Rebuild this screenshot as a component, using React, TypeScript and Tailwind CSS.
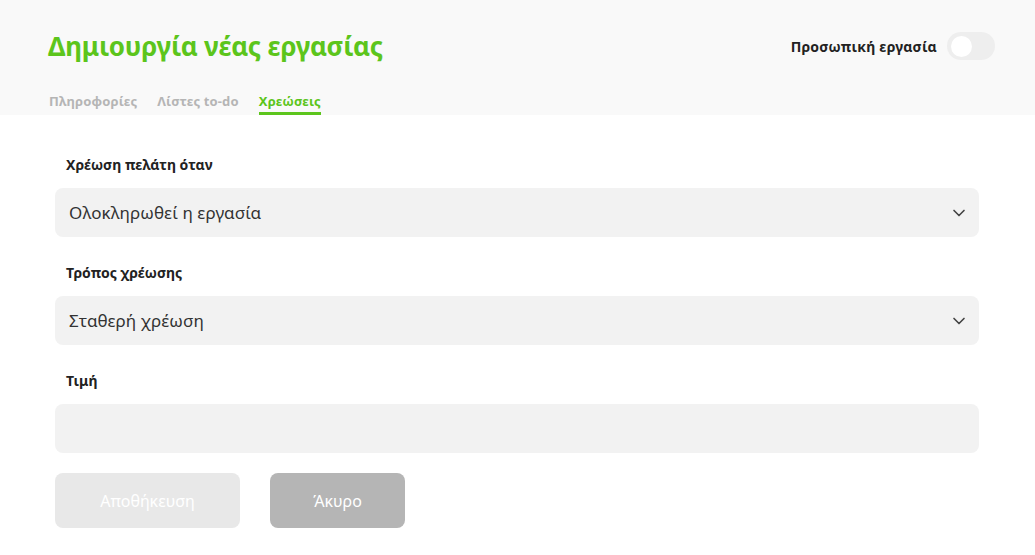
import { ChevronDown } from 'lucide-react';

const font = { fontFamily: '"Noto Sans", "DejaVu Sans", sans-serif' };

const tabs = ['Πληροφορίες', 'Λίστες to-do', 'Χρεώσεις'];

function Select({ value }: { value: string }) {
  return (
    <div className="flex h-[49px] items-center justify-between rounded-lg bg-[#f2f2f2] pl-[14px] pr-[10px]">
      <span className="text-[17px] tracking-[0.1px] text-[#333]">{value}</span>
      <ChevronDown className="h-5 w-5 text-[#444]" strokeWidth={2} />
    </div>
  );
}

function Field({ label, children }: { label: string; children: React.ReactNode }) {
  return (
    <div className="mb-[26px]">
      <div className="mb-[13px] pl-[11px] text-[14px] font-bold leading-[20px] text-[#222]">{label}</div>
      {children}
    </div>
  );
}

export default function App() {
  return (
    <div className="h-[555px] w-[1035px] overflow-hidden bg-white" style={font}>
      <div className="bg-[#f9f9f9] pl-[48px] pr-[40px]">
        <div className="flex h-[92px] items-center justify-between">
          <h1 className="text-[26px] font-bold tracking-[-0.2px] text-[#5cc51c]">Δημιουργία νέας εργασίας</h1>
          <div className="flex items-center gap-[10px]">
            <span className="text-[14px] font-bold tracking-[0.25px] text-[#222]">Προσωπική εργασία</span>
            <div className="flex h-[28px] w-[48px] items-center rounded-full bg-[#eeeeee] px-[4px]">
              <div className="h-[21px] w-[21px] rounded-full bg-white" />
            </div>
          </div>
        </div>
        <div className="flex gap-[20px] pl-[1px]">
          {tabs.map((t, i) => (
            <div
              key={t}
              className={`border-b-[3px] pb-[2px] text-[13px] font-bold leading-[18px] tracking-[0.15px] ${
                i === 2 ? 'border-[#5cc51c] text-[#5cc51c]' : 'border-transparent text-[#b5b5b5]'
              }`}
            >
              {t}
            </div>
          ))}
        </div>
      </div>

      <div className="flex flex-col pl-[55px] pr-[56px] pt-[40px]">
        <Field label="Χρέωση πελάτη όταν">
          <Select value="Ολοκληρωθεί η εργασία" />
        </Field>
        <Field label="Τρόπος χρέωσης">
          <Select value="Σταθερή χρέωση" />
        </Field>
        <div className="mb-[20px]">
          <div className="mb-[13px] pl-[11px] text-[14px] font-bold leading-[20px] text-[#222]">Τιμή</div>
          <div className="h-[49px] rounded-lg bg-[#f2f2f2]" />
        </div>
        <div className="flex gap-[30px]">
          <button className="h-[55px] w-[185px] rounded-lg bg-[#e8e8e8] text-[16px] text-white">Αποθήκευση</button>
          <button className="h-[55px] w-[135px] rounded-lg bg-[#b5b5b5] text-[16px] text-white">Άκυρο</button>
        </div>
      </div>
    </div>
  );
}
